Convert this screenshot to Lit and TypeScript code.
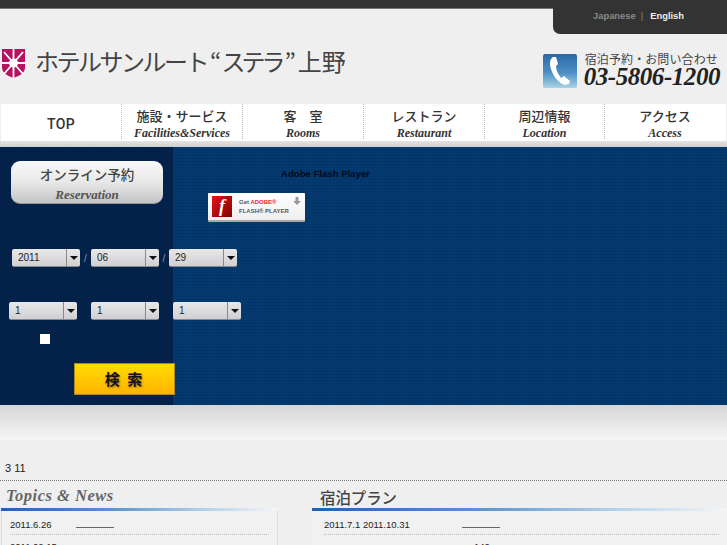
import { LitElement, html, css } from "lit";
import { customElement } from "lit/decorators.js";

@customElement("app-root")
export class AppRoot extends LitElement {
  static styles = css`
    :host { display: block; position: relative; width: 727px; height: 545px; overflow: hidden; background: #efefef;
      font-family: "Liberation Sans", "Noto Sans CJK JP", sans-serif; color: #222; }
    .top { height: 8px; background: #333; border-bottom: 1px solid #777; }
    .lang { position: absolute; right: 0; top: 0; width: 174px; height: 34px; background: #333; border-radius: 0 0 0 7px;
      display: flex; gap: 5px; padding: 10px 0 0 40px; box-sizing: border-box; font-size: 9.4px; line-height: 11px; color: #888; font-weight: 700; }
    .lang b { color: #eee; margin-left: 2px; }
    .lang i { font-style: normal; font-weight: 400; }
    .head { height: 95px; display: flex; justify-content: space-between; box-sizing: border-box; padding: 39px 7px 0 2px; }
    .brand { display: flex; gap: 10px; align-items: flex-start; }
    .brand span { font-family: "Noto Sans CJK JP", sans-serif; font-size: 24px; line-height: 28px; color: #444; white-space: nowrap; display: flex; }
    .brand > span { margin-top: -1px; }
    .brand .k { letter-spacing: -2.5px; }
    .brand .q { margin-left: 3px; }
    .brand .s { letter-spacing: -4px; }
    .brand .u { margin-left: 2px; }
    .tel { display: flex; gap: 7px; margin-top: 5px; }
    .phone { width: 34px; height: 34px; margin-top: 1px; }
    .telt { display: flex; flex-direction: column; margin-top: -1px; }
    .telt small { font-family: "Noto Sans CJK JP", sans-serif; font-size: 12px; line-height: 14px; color: #444; margin-left: 1px; letter-spacing: .1px; }
    .telt strong { font: italic 700 25px/22px "Liberation Serif", serif; letter-spacing: -.45px; color: #222; white-space: nowrap; }
    nav { display: grid; grid-template-columns: repeat(6, 121px); margin-left: 1px; width: 725px; height: 37px; background: #fff; }
    .ni { display: flex; flex-direction: column; align-items: center; height: 35px; border-right: 1px dotted #bbb; box-sizing: border-box; }
    .ni:last-child { border-right: 0; padding-right: 3px; }
    .ni:nth-child(5) { width: 120px; }
    .ni b { font-family: "Noto Sans CJK JP", sans-serif; font-weight: 500; font-size: 13px; line-height: 16px; margin-top: 4px; color: #333; white-space: nowrap; }
    .ni em { font: italic 700 12px/13px "Liberation Serif", serif; color: #333; margin-top: 3px; white-space: nowrap; }
    .ni.t { justify-content: center; }
    .ni.t b { font-family: Roboto, sans-serif; font-size: 14px; font-weight: 500; margin: 4px 0 0; letter-spacing: .4px; }
    .strip { height: 6px; background: linear-gradient(#e4e4e4, #cfcfcf); }
    .hero { height: 258px; display: flex; background-color: #043a72;
      background-image: repeating-linear-gradient(0deg, rgba(0,0,0,.07) 0 1px, transparent 1px 3px), repeating-linear-gradient(90deg, rgba(0,0,0,.07) 0 1px, transparent 1px 3px); }
    .panel { width: 173px; flex: none; background: rgba(3,20,50,.6); box-sizing: border-box; padding-top: 14px; display: flex; flex-direction: column; }
    .resv { width: 152px; height: 43px; margin-left: 11px; box-sizing: border-box; border-radius: 9px; background: linear-gradient(#f8f8f8, #e8e8e8 50%, #c4c4c4); display: flex; flex-direction: column; align-items: center; border-bottom: 1px solid #999; }
    .resv b { font-family: "Noto Sans CJK JP", sans-serif; font-size: 13.5px; line-height: 18px; font-weight: 500; color: #444; margin-top: 4px; }
    .resv em { font: italic 700 13px/14px "Liberation Serif", serif; color: #555; margin-top: 5px; }
    .row { display: flex; align-items: center; white-space: nowrap; }
    .d { margin: 45px 0 0 12px; }
    .r2 { margin: 35px 0 0 9px; gap: 14px; }
    .sl { width: 11px; flex: none; text-align: center; font-size: 10px; color: #8899aa; }
    .sl + .sel + .sl { width: 10px; }
    .sel { width: 68px; height: 18px; flex: none; box-sizing: border-box; border-radius: 2px; background: linear-gradient(#e8e8e8, #d0d0d4); border-bottom: 1px solid #888; display: flex; font-size: 10px; line-height: 17px; color: #222; }
    .sel span { flex: 1; padding-left: 6px; }
    .sel i { width: 13px; border-left: 1px solid #888; display: flex; align-items: center; justify-content: center; }
    .sel i::after { content: ""; border: 4px solid transparent; border-top: 4px solid #111; border-bottom: 0; }
    .cb { width: 10px; height: 10px; background: #fff; margin: 14px 0 0 40px; }
    .go { width: 101px; height: 32px; margin: 19px 0 0 74px; flex: none; box-sizing: border-box; border: 1px solid #b08a20; background: linear-gradient(#ffdc00, #ffb300); font-family: "Noto Sans CJK JP", sans-serif; font-size: 15px; font-weight: 700; line-height: 29px; text-align: center; color: #111; letter-spacing: 2px; text-shadow: 1px 1px 2px #9a6a00; position: relative; }
    .fl { display: flex; flex-direction: column; flex: 1; padding: 21px 0 0 35px; }
    .fl > span { margin-left: 73px; font-size: 9.6px; line-height: 12px; font-weight: 700; color: #00091a; }
    .badge { width: 97px; height: 29px; margin-top: 13px; box-sizing: border-box; background: linear-gradient(#fff, #eee); border-bottom: 2px solid #aaa; border-radius: 1px; display: flex; align-items: center; gap: 7px; padding: 0 4px; position: relative; }
    .flogo { width: 20px; height: 21px; background: linear-gradient(135deg, #e81212, #7a0505); color: #fff; font: italic 700 18px/21px "Liberation Serif", serif; text-align: center; flex: none; }
    .bt { font-size: 6px; line-height: 9px; font-weight: 700; color: #555; white-space: nowrap; }
    .bt u { color: #f23; text-decoration: none; }
    .arr { position: absolute; right: 4px; top: 4px; width: 8px; height: 8px; }
    .fade { height: 35px; background: linear-gradient(#d6d6d6, #f6f6f6); }
    .note { font-size: 11px; line-height: 12px; margin: 22px 0 0 5px; color: #222; }
    .dots { border-top: 1px dotted #777; margin-top: 6px; }
    .cols { display: grid; grid-template-columns: 277px 415px; column-gap: 34px; margin-left: 1px; }
    .ttl { height: 27px; box-sizing: border-box; }
    .ttl.en { font: italic 700 16.5px/29px "Liberation Serif", serif; color: #666; padding-left: 5px; letter-spacing: .5px; }
    .ttl.ja { font-family: "Noto Sans CJK JP", sans-serif; font-size: 15.4px; line-height: 32px; font-weight: 500; color: #444; padding-left: 8px; }
    .bar { height: 3px; background: linear-gradient(90deg, #1e62b0, #5b93cf 40%, #b8d4ec 75%, #f5f5f5); }
    .box { border: 1px solid #ddd; border-top: 0; border-bottom: 0; height: 40px; padding: 0 8px; background: #f1f1f1; font-size: 9.5px; line-height: 12px; }
    .box.plain { border: 0; padding-left: 12px; }
    .it { display: flex; height: 24px; border-bottom: 1px dotted #bbb; box-sizing: border-box; padding-top: 8px; }
    .date { width: 66px; flex: none; }
    .plain .date { width: 138px; }
    .lnk { width: 38px; height: 8px; border-bottom: 1px solid #666; flex: none; }
    .next { padding-top: 6px; }
    .plain .next { padding-left: 150px; }
  `;

  render() {
    const nav = [["施設・サービス", "Facilities&Services"], ["客　室", "Rooms"], ["レストラン", "Restaurant"], ["周辺情報", "Location"], ["アクセス", "Access"]];
    const sel = (v: string) => html`<div class="sel"><span>${v}</span><i></i></div>`;
    return html`
      <div class="top"></div>
      <div class="lang"><span>Japanese</span><i>|</i><b>English</b></div>
      <header class="head">
        <div class="brand">
          <svg width="23" height="29" viewBox="0 0 23 29" style="margin-top:1px">
            <path d="M0 0H23V19Q23 25 11.5 29Q0 25 0 19Z" fill="#b5125f"/>
            <g stroke="#fff" stroke-width="1.8"><path d="M11.5 0V29M0 14H23M2 3L21 25M21 3L2 25"/></g>
            <circle cx="11.500" cy="14" r="4.500" fill="#fff"/>
          </svg>
          <span><span class="k">ホテルサンルート</span><span class="q">“</span><span class="s">ステラ</span><span class="q">”</span><span class="u">上野</span></span>
        </div>
        <div class="tel">
          <svg class="phone" viewBox="0 0 34 34">
            <defs><linearGradient id="pg" x1="0" y1="0" x2="0" y2="1"><stop offset="0" stop-color="#2a68a8"/><stop offset=".55" stop-color="#4f8fc4"/><stop offset="1" stop-color="#a8d4e6"/></linearGradient></defs>
            <rect width="34" height="34" rx="2" fill="url(#pg)"/>
            <path d="M10 3C7 5 6 9 8 15C10 22 15 28 21 31L26 30L27 27L21 22L18 24C15 20 13 16 13 12L15 10L13 3Z" fill="#fff"/>
          </svg>
          <div class="telt"><small>宿泊予約・お問い合わせ</small><strong>03-5806-1200</strong></div>
        </div>
      </header>
      <nav>
        <div class="ni t"><b>TOP</b></div>
        ${nav.map(([j, e]) => html`<div class="ni"><b>${j}</b><em>${e}</em></div>`)}
      </nav>
      <div class="strip"></div>
      <section class="hero">
        <div class="panel">
          <div class="resv"><b>オンライン予約</b><em>Reservation</em></div>
          <div class="row d">${sel("2011")}<span class="sl">/</span>${sel("06")}<span class="sl">/</span>${sel("29")}</div>
          <div class="row r2">${sel("1")}${sel("1")}${sel("1")}</div>
          <div class="cb"></div>
          <div class="go">検 索</div>
        </div>
        <div class="fl">
          <span>Adobe Flash Player</span>
          <div class="badge">
            <div class="flogo">f</div>
            <div class="bt">Get <u>ADOBE®</u><br>FLASH® PLAYER</div>
            <svg class="arr" viewBox="0 0 8 8"><path d="M2.5 0H5.500V4H8L4 8L0 4H2.500Z" fill="#999"/></svg>
          </div>
        </div>
      </section>
      <div class="fade"></div>
      <div class="note">3 11</div>
      <div class="dots"></div>
      <div class="cols">
        <div>
          <div class="ttl en">Topics &amp; News</div>
          <div class="bar"></div>
          <div class="box"><div class="it"><span class="date">2011.6.26</span><span class="lnk"></span></div><div class="next">2011.02.15</div></div>
        </div>
        <div>
          <div class="ttl ja">宿泊プラン</div>
          <div class="bar"></div>
          <div class="box plain"><div class="it"><span class="date">2011.7.1 2011.10.31</span><span class="lnk"></span></div><div class="next">140</div></div>
        </div>
      </div>
    `;
  }
}
